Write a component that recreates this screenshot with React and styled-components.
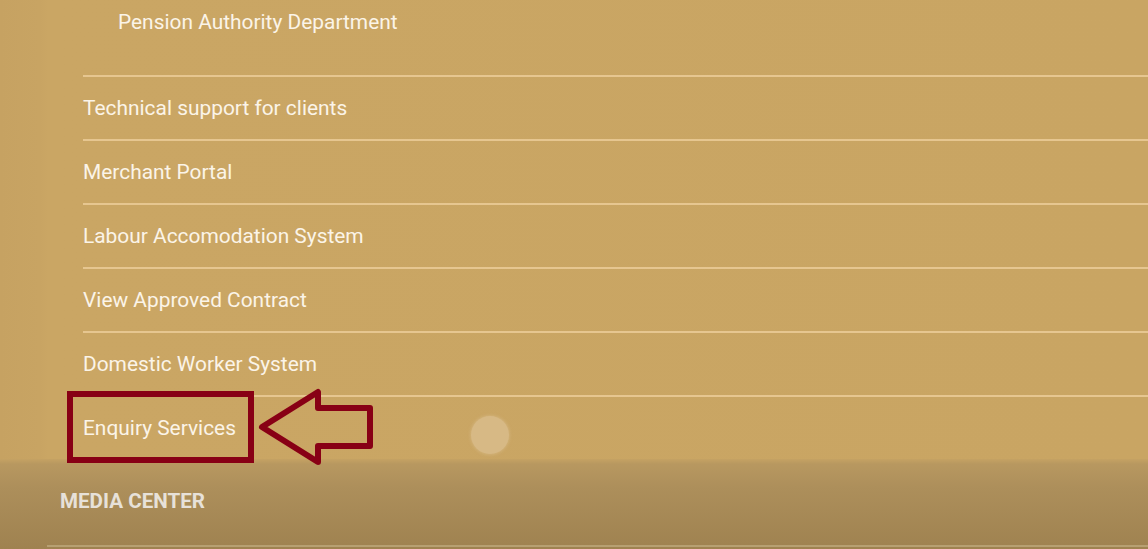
import React from "react";
import styled, { createGlobalStyle } from "styled-components";

const Global = createGlobalStyle`
  html, body { margin: 0; padding: 0; }
  body { width: 1148px; height: 549px; overflow: hidden; background: #c9a463; font-family: Roboto, "Liberation Sans", sans-serif; }
`;

const Page = styled.div`
  position: relative;
  width: 1148px;
  height: 549px;
  display: flex;
  flex-direction: column;
  background: linear-gradient(90deg, #c6a262 0px, #c8a463 40px, #caa664 48px, #c9a563 100%);
  overflow: hidden;
`;

const Menu = styled.div`
  flex-shrink: 0;
  display: flex;
  flex-direction: column;
  padding-left: 83px;
`;

const SubItem = styled.div`
  flex-shrink: 0;
  height: 75px;
  box-sizing: border-box;
  padding-left: 35px;
  padding-bottom: 32px;
  display: flex;
  align-items: center;
  color: #fbf4e8;
  font-size: 20.9px;
`;

const Item = styled.div`
  flex-shrink: 0;
  height: 64px;
  box-sizing: border-box;
  border-top: 2px solid #e6c690;
  display: flex;
  align-items: center;
  padding-bottom: 1px;
  color: #fbf4e8;
  font-size: 20.9px;
`;

const Footer = styled.div`
  flex: 1;
  display: flex;
  flex-direction: column;
  background: linear-gradient(180deg, #c5a263 0px, #b89860 5px, #ad8f5b 28px, #9f8250 90px);
`;

const Section = styled.div`
  flex: 1;
  display: flex;
  align-items: center;
  padding-left: 60px;
  padding-bottom: 2px;
  color: #e7e1d9;
  font-size: 20.6px;
  font-weight: 700;
`;

const FooterLine = styled.div`
  margin-left: 47px;
  height: 2px;
  margin-bottom: 2px;
  background: #b7a072;
`;

const Highlight = styled.div`
  position: absolute;
  left: 67px;
  top: 391px;
  width: 187px;
  height: 72px;
  box-sizing: border-box;
  border: 6px solid #880015;
`;

const Arrow = styled.svg`
  position: absolute;
  left: 255px;
  top: 385px;
`;

const Touch = styled.div`
  position: absolute;
  left: 471px;
  top: 416px;
  width: 38px;
  height: 38px;
  border-radius: 50%;
  background: #d7b985;
  box-shadow: 0 0 3px 1px rgba(215, 185, 133, 0.6);
`;

const items = [
  "Technical support for clients",
  "Merchant Portal",
  "Labour Accomodation System",
  "View Approved Contract",
  "Domestic Worker System",
  "Enquiry Services",
];

export default function App() {
  return (
    <>
      <Global />
      <Page>
        <Menu>
          <SubItem>Pension Authority Department</SubItem>
          {items.map((t) => (
            <Item key={t}>{t}</Item>
          ))}
        </Menu>
        <Footer>
          <Section>MEDIA CENTER</Section>
          <FooterLine />
        </Footer>
        <Touch />
        <Highlight />
        <Arrow width="125" height="85" viewBox="0 0 125 85">
          <polygon
            points="7,42 63,7 63,23 115,23 115,61 63,61 63,77"
            fill="none"
            stroke="#880015"
            strokeWidth="6"
            strokeLinejoin="round"
          />
        </Arrow>
      </Page>
    </>
  );
}
